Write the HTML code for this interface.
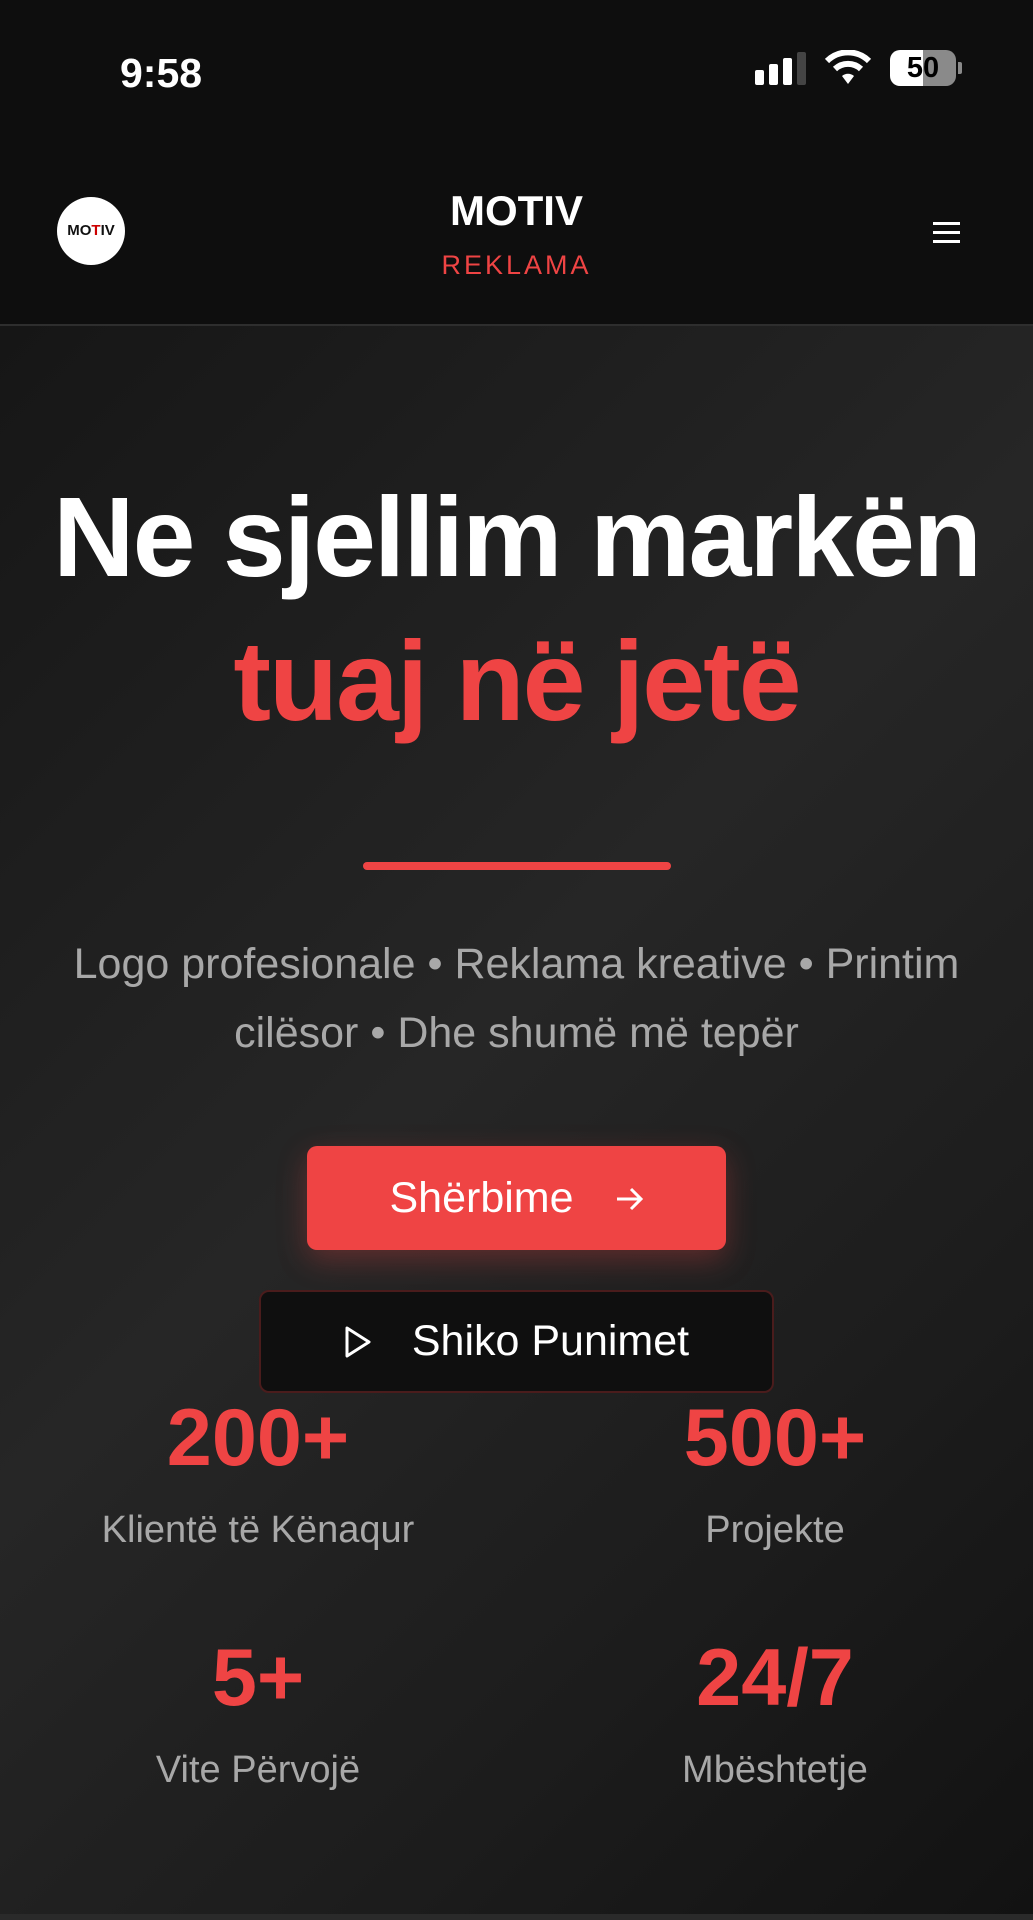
<!DOCTYPE html>
<html><head><meta charset="utf-8"><style>
*{margin:0;padding:0;box-sizing:border-box}
body{width:1033px;height:1920px;overflow:hidden;background:#0e0e0e;font-family:"Liberation Sans",sans-serif;position:relative}
.a{position:absolute}
.c{position:absolute;left:0;width:1033px;text-align:center}
.hero{position:absolute;left:0;top:324px;width:1033px;height:1596px;background:linear-gradient(135deg,#161616 0%,#262626 45%,#1c1c1c 75%,#121212 100%);border-top:2px solid #2e2e2e}
.red{color:#ef4444}
.n{font-weight:bold;font-size:81px;color:#ef4444;position:absolute;width:516px;text-align:center}
.l{font-size:38px;color:#a8a8a8;position:absolute;width:516px;text-align:center}
</style></head><body>
<div class="a" style="left:120px;top:50px;font-size:41px;font-weight:bold;color:#fff">9:58</div>
<div class="a" style="left:755px;top:70px;width:9px;height:15px;background:#fff;border-radius:2px"></div>
<div class="a" style="left:769px;top:64px;width:9px;height:21px;background:#fff;border-radius:2px"></div>
<div class="a" style="left:783px;top:58px;width:9px;height:27px;background:#fff;border-radius:2px"></div>
<div class="a" style="left:797px;top:52px;width:9px;height:33px;background:#444;border-radius:2px"></div>
<svg class="a" style="left:824px;top:50px" width="48" height="36" viewBox="0 0 48 36"><path d="M24 34 L18 26 A9 9 0 0 1 30 26 Z" fill="#fff"/><path d="M11 19 A19 19 0 0 1 37 19" stroke="#fff" stroke-width="6" fill="none"/><path d="M3 11 A30 30 0 0 1 45 11" stroke="#fff" stroke-width="6" fill="none"/></svg>
<div class="a" style="left:890px;top:50px;width:66px;height:36px;border-radius:10px;background:linear-gradient(90deg,#fff 50%,#8a8a8a 50%);color:#000;font-weight:bold;font-size:29px;text-align:center;line-height:36px">50</div>
<div class="a" style="left:958px;top:62px;width:4px;height:12px;background:#8a8a8a;border-radius:0 2px 2px 0"></div>
<div class="a" style="left:57px;top:197px;width:68px;height:68px;border-radius:50%;background:#fff;text-align:center;font-weight:bold;font-size:15px;line-height:68px;color:#111">MO<span style="color:#c00">T</span>IV</div>
<div class="c" style="top:187px;font-size:42px;font-weight:bold;color:#fff">MOTIV</div>
<div class="c" style="top:250px;font-size:27px;letter-spacing:3px;color:#ef4444">REKLAMA</div>
<div class="a" style="left:933px;top:222px;width:27px;height:3px;background:#fff;box-shadow:0 9px 0 #fff,0 18px 0 #fff"></div>
<div class="hero"></div>
<div class="c" style="top:472px;font-size:113px;font-weight:bold;color:#fff;letter-spacing:-2px">Ne sjellim markën</div>
<div class="c red" style="top:616px;font-size:113px;font-weight:bold;letter-spacing:-2px">tuaj në jetë</div>
<div class="a" style="left:363px;top:862px;width:308px;height:8px;border-radius:4px;background:#ef4444"></div>
<div class="c" style="top:930px;font-size:43px;line-height:69px;color:#a8a8a8;padding:0 40px">Logo profesionale • Reklama kreative • Printim cilësor • Dhe shumë më tepër</div>
<div class="a" style="left:307px;top:1146px;width:419px;height:104px;border-radius:10px;background:#ef4444;box-shadow:0 10px 30px rgba(239,68,68,.3);color:#fff;font-size:43px;line-height:104px;text-align:center">Shërbime<svg style="margin-left:40px;vertical-align:-2px" width="30" height="30" viewBox="0 0 30 30"><path d="M3 15H27M17 5L27 15L17 25" stroke="#fff" stroke-width="3" fill="none"/></svg></div>
<div class="a" style="left:259px;top:1290px;width:515px;height:103px;border-radius:10px;background:#0f0f0f;border:2px solid #4a1c1c;color:#fff;font-size:43px;line-height:99px;text-align:center"><svg style="margin-right:40px;vertical-align:-4px" width="28" height="34" viewBox="0 0 28 34"><path d="M3 3L25 17L3 31Z" stroke="#fff" stroke-width="3" fill="none" stroke-linejoin="round"/></svg>Shiko Punimet</div>
<div class="n" style="left:0;top:1392px">200+</div>
<div class="n" style="left:517px;top:1392px">500+</div>
<div class="l" style="left:0;top:1509px">Klientë të Kënaqur</div>
<div class="l" style="left:517px;top:1509px">Projekte</div>
<div class="n" style="left:0;top:1632px">5+</div>
<div class="n" style="left:517px;top:1632px">24/7</div>
<div class="l" style="left:0;top:1749px">Vite Përvojë</div>
<div class="l" style="left:517px;top:1749px">Mbështetje</div>
<div class="a" style="left:0;top:1914px;width:1033px;height:6px;background:#2a2a2a"></div>
</body></html>
